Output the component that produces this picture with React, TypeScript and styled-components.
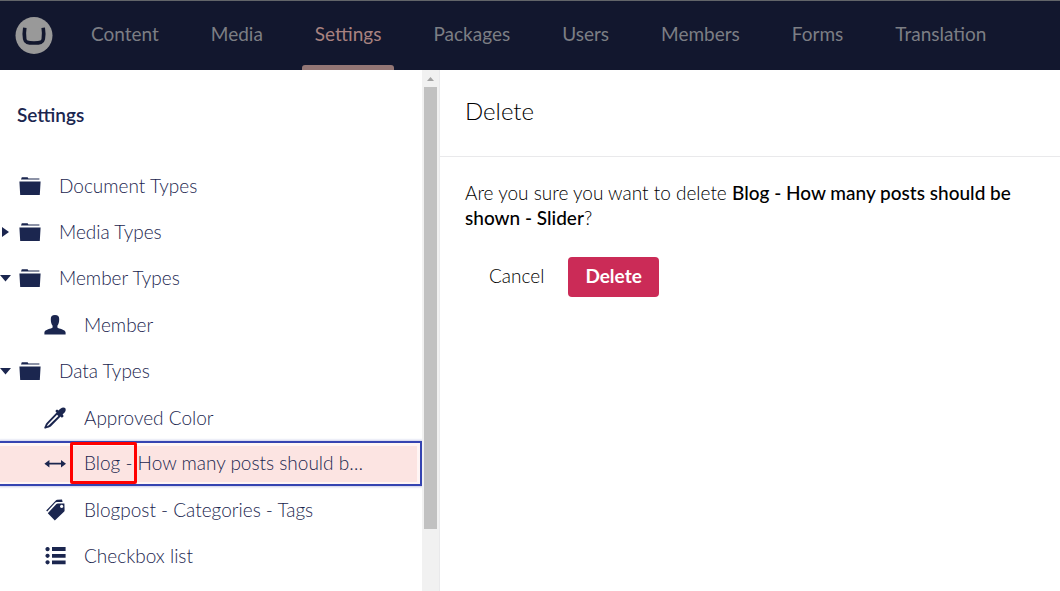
import React from "react";
import styled, { createGlobalStyle, css } from "styled-components";

const GlobalStyle = createGlobalStyle`
  *, *::before, *::after { box-sizing: border-box; }
  html, body, #root { height: 100%; }
  body {
    margin: 0;
    background: #fff;
    font-family: Lato, "Open Sans", sans-serif;
    font-size: 19px;
    font-weight: 300;
    line-height: 25px;
    color: #1b264f;
  }
  button { font: inherit; border: 0; cursor: pointer; }
  ul { list-style: none; margin: 0; padding: 0; }
  h1, h2, p { margin: 0; }
`;

const Page = styled.div`
  display: flex;
  flex-direction: column;
  height: 100vh;
  overflow: hidden;
`;

const TopBar = styled.header`
  display: flex;
  flex: none;
  align-items: stretch;
  height: 70px;
  padding-left: 15px;
  border-top: 1px solid #626569;
  background: #12172e;
`;

const Logo = styled.a`
  display: flex;
  align-items: center;
  margin-right: 12px;
`;

const SectionNav = styled.nav`
  display: flex;
`;

const Sections = styled.ul`
  display: flex;
`;

const Section = styled.li`
  display: flex;
`;

const SectionLink = styled.a<{ $active?: boolean }>`
  position: relative;
  display: flex;
  align-items: center;
  padding: 0 26px 4px;
  color: ${(p) => (p.$active ? "#a88280" : "#7c7e84")};
  font-weight: 400;
  text-decoration: none;
  ${(p) =>
    p.$active &&
    css`
      &::after {
        content: "";
        position: absolute;
        left: 13px;
        right: 13px;
        bottom: 0;
        height: 5px;
        border-radius: 3px 3px 0 0;
        background: #937675;
      }
    `}
`;

const Body = styled.div`
  display: flex;
  flex: 1;
  min-height: 0;
`;

const Sidebar = styled.aside`
  display: flex;
  flex: none;
  width: 440px;
  border-right: 1px solid #e9e9eb;
`;

const TreePane = styled.nav`
  flex: 1;
  min-width: 0;
  overflow: hidden;
`;

const TreeTitle = styled.h2`
  padding: 32px 17px 36px;
  font-size: 19px;
  font-weight: 600;
  line-height: 25px;
`;

const Branch = styled.ul`
  padding-top: 1px;
`;

const Row = styled.div<{ $nested?: boolean; $selected?: boolean }>`
  position: relative;
  display: flex;
  align-items: center;
  height: 46px;
  padding-left: ${(p) => (p.$nested ? 44 : 0)}px;
  ${(p) =>
    p.$selected &&
    css`
      height: 45px;
      margin-bottom: 1px;
      border: solid #3544b1;
      border-width: 2px 2px 2px 0;
      box-shadow: inset -3px 0 #fff5f4, inset 0 3px #fff5f4,
        inset 0 -2px #fff5f4, 0 0 2px 1px #c9cdea;
      background: #fce4e2;
    `}
`;

const Toggle = styled.button`
  display: flex;
  flex: none;
  align-items: center;
  width: 19px;
  height: 46px;
  padding: 0;
  background: none;
`;

const TreeIcon = styled.svg`
  flex: none;
  width: 22px;
  height: 22px;
  fill: #1b264f;
`;

const TreeLabel = styled.a`
  flex: 1;
  min-width: 0;
  margin: 0 50px 0 18px;
  padding-bottom: 2px;
  overflow: hidden;
  color: #1b264f;
  text-decoration: none;
  text-overflow: ellipsis;
  white-space: nowrap;
`;

const Highlight = styled.span`
  position: absolute;
  top: -1px;
  left: 70px;
  width: 67px;
  height: 42px;
  border: 3px solid #f00;
  border-radius: 2px;
`;

const ScrollTrack = styled.div`
  display: flex;
  flex-direction: column;
  align-items: center;
  flex: none;
  width: 17px;
  padding-bottom: 62px;
  background: #f1f1f1;
`;

const ScrollArrow = styled.svg`
  flex: none;
  width: 17px;
  height: 17px;
  fill: #a3a3a3;
`;

const ScrollThumb = styled.div`
  flex: 1;
  width: 13px;
  background: #c1c1c1;
`;

const Panel = styled.main`
  flex: 1;
  min-width: 0;
  color: #000;
`;

const PanelHeader = styled.div`
  padding: 26px 25px 30px;
  border-bottom: 1px solid #e9e9eb;
`;

const PanelTitle = styled.h1`
  font-size: 24px;
  font-weight: 300;
  line-height: 30px;
`;

const PanelBody = styled.div`
  padding: 23px 25px;
`;

const Question = styled.p`
  strong {
    font-weight: 500;
  }
`;

const Actions = styled.div`
  display: flex;
  gap: 5px;
  margin-top: 27px;
`;

const ActionButton = styled.button<{ $danger?: boolean }>`
  height: 40px;
  padding: 0 ${(p) => (p.$danger ? "17px 3px" : "19px 3px 24px")};
  border-radius: 4px;
  background: ${(p) => (p.$danger ? "#cb2b57" : "transparent")};
  color: ${(p) => (p.$danger ? "#fff" : "#000")};
  font-weight: ${(p) => (p.$danger ? 700 : 300)};
`;

const icons = {
  folder: (
    <path d="M2 4.600 2.800 2.200H8.600L9.400 3.400H20.400V4.600H2ZM.4 6.600H21.600L20.800 20H1.200Z" />
  ),
  user: (
    <path d="M11 1C14 1 15.200 2.400 15.200 5 15.200 8 14.600 10.400 13.400 11.800V13.600C14.400 15 21.600 15.400 21.600 18.600V20.600H.4V18.600C.4 15.400 7.600 15 8.600 13.600V11.800C7.400 10.400 6.800 8 6.800 5 6.800 2.400 8 1 11 1Z" />
  ),
  dropper: (
    <path
      fillRule="evenodd"
      d="M14.600 3.600C16 2 17.400.6 19.400.6 21.200.6 22 1.800 21.600 3.400 21.200 5 19.800 6.200 18.600 7.400L19.400 8.600C19.800 9.800 18.600 11 17.400 10.400L16.600 9.600 6.800 19.400C4.800 21 3 20.400 1.800 21.400.8 22-.2 21 .6 19.800 1.400 18.600 1.200 17.200 3 15.400L12.600 5.600 11.600 4.600C11.200 3.400 12.400 2.200 13.600 2.800ZM13 7.800 4.600 16.400C3.200 17.800 3.200 18.600 2.800 19.400 3.600 19 4.400 18.800 5.600 17.600L14.400 9Z"
    />
  ),
  arrows: <path d="M.4 10.700 5.400 7V9.800H17V7L22 10.700 17 14.600V11.600H5.400V14.600Z" />,
  tags: (
    <>
      <path d="M2.200 11.600 11.800 1.400C12.200.9 12.600.7 13.200.7L18 .6 18.600 3 12.800 3C12.200 3 11.800 3.200 11.400 3.600L3.200 12.400Z" />
      <path
        fillRule="evenodd"
        d="M3.800 14.200 12.400 5C12.800 4.600 13.200 4.400 13.800 4.400L20.400 4.400 20.600 11.400C20.600 12 20.400 12.400 20 12.800L10.800 21.600ZM17.600 5.800a1.600 1.600 0 1 0 .1 0Z"
      />
    </>
  ),
  list: (
    <path d="M8 2H21.600V6H8ZM8 9H21.600V12.800H8ZM8 15.400H21.600V19.200H8ZM3.600 2A2.100 2.100 0 1 1 3.500 2ZM3.600 8.700A2.100 2.100 0 1 1 3.500 8.700ZM3.600 15.200A2.100 2.100 0 1 1 3.500 15.200Z" />
  ),
};

type IconName = keyof typeof icons;

interface NodeData {
  label: string;
  icon: IconName;
  state?: "open" | "closed";
  selected?: boolean;
  children?: NodeData[];
}

const tree: NodeData[] = [
  { label: "Document Types", icon: "folder" },
  { label: "Media Types", icon: "folder", state: "closed" },
  {
    label: "Member Types",
    icon: "folder",
    state: "open",
    children: [{ label: "Member", icon: "user" }],
  },
  {
    label: "Data Types",
    icon: "folder",
    state: "open",
    children: [
      { label: "Approved Color", icon: "dropper" },
      {
        label: "Blog - How many posts should be shown - Slider",
        icon: "arrows",
        selected: true,
      },
      { label: "Blogpost - Categories - Tags", icon: "tags" },
      { label: "Checkbox list", icon: "list" },
    ],
  },
];

const sections = [
  "Content",
  "Media",
  "Settings",
  "Packages",
  "Users",
  "Members",
  "Forms",
  "Translation",
];

function TreeNode({ node, nested }: { node: NodeData; nested?: boolean }) {
  return (
    <li>
      <Row $nested={nested} $selected={node.selected}>
        {!nested && (
          <Toggle aria-label={`Toggle ${node.label}`} aria-expanded={node.state === "open"}>
            <svg width="12" height="12" fill="#1b264f" aria-hidden="true">
              {node.state === "closed" && <path d="M2 1 9 6 2 11Z" />}
              {node.state === "open" && <path d="M0 3H11L5.500 9.500Z" />}
            </svg>
          </Toggle>
        )}
        <TreeIcon viewBox="0 0 22 22" aria-hidden="true">
          {icons[node.icon]}
        </TreeIcon>
        <TreeLabel href="#">{node.label}</TreeLabel>
        {node.selected && <Highlight />}
      </Row>
      {node.children && (
        <Branch>
          {node.children.map((child) => (
            <TreeNode key={child.label} node={child} nested />
          ))}
        </Branch>
      )}
    </li>
  );
}

export default function App() {
  return (
    <Page>
      <GlobalStyle />
      <TopBar>
        <Logo href="#" aria-label="Home">
          <svg width="38" height="38" viewBox="0 0 38 38" aria-hidden="true">
            <circle cx="19" cy="18.500" r="18.500" fill="#999" />
            <path
              d="M9.800 10.800C9.100 15 9.100 18.500 9.700 22 10.200 25.400 12.600 26 19 26S27.800 25.400 28.300 22C28.900 18.500 28.900 15 28.200 10.800"
              fill="none"
              stroke="#12172e"
              strokeWidth="3.600"
            />
          </svg>
        </Logo>
        <SectionNav aria-label="Sections">
          <Sections>
            {sections.map((name) => (
              <Section key={name}>
                <SectionLink href="#" $active={name === "Settings"}>
                  {name}
                </SectionLink>
              </Section>
            ))}
          </Sections>
        </SectionNav>
      </TopBar>
      <Body>
        <Sidebar>
          <TreePane aria-label="Settings tree">
            <TreeTitle>Settings</TreeTitle>
            <ul>
              {tree.map((node) => (
                <TreeNode key={node.label} node={node} />
              ))}
            </ul>
          </TreePane>
          <ScrollTrack aria-hidden="true">
            <ScrollArrow viewBox="0 0 17 17">
              <path d="M5 11 8.500 7 12 11Z" />
            </ScrollArrow>
            <ScrollThumb />
          </ScrollTrack>
        </Sidebar>
        <Panel>
          <PanelHeader>
            <PanelTitle>Delete</PanelTitle>
          </PanelHeader>
          <PanelBody>
            <Question>
              Are you sure you want to delete{" "}
              <strong>Blog - How many posts should be shown - Slider</strong>?
            </Question>
            <Actions>
              <ActionButton type="button">Cancel</ActionButton>
              <ActionButton type="button" $danger>
                Delete
              </ActionButton>
            </Actions>
          </PanelBody>
        </Panel>
      </Body>
    </Page>
  );
}
